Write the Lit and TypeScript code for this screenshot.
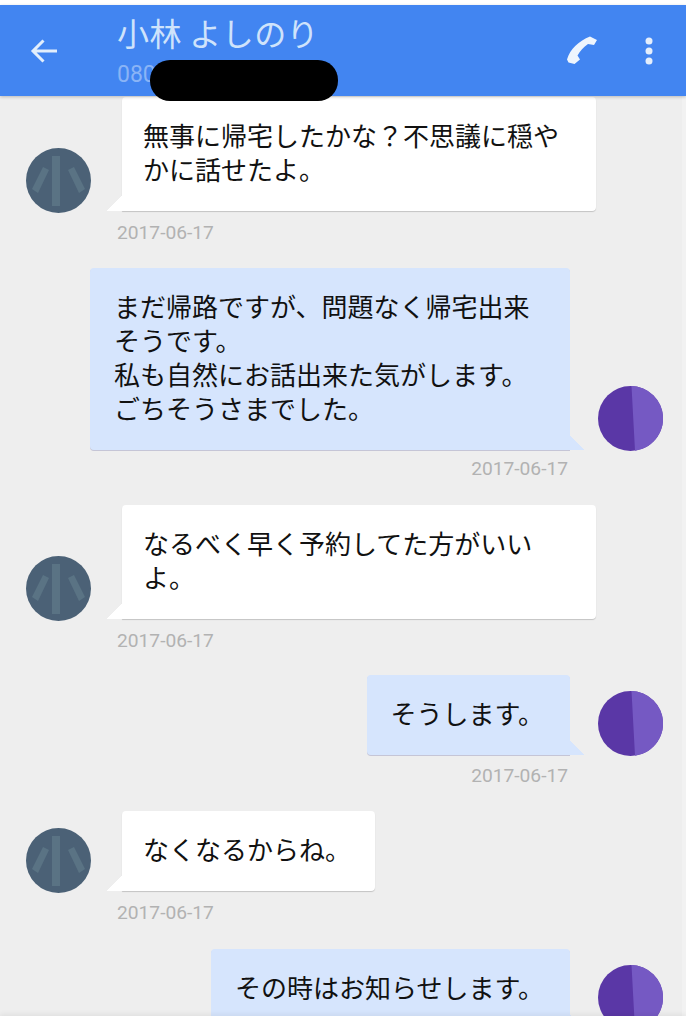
import { LitElement, html, css, svg } from "lit";
import { customElement } from "lit/decorators.js";

type Msg = { side: "in" | "out"; lines: string[]; wide?: boolean; hideDate?: boolean };

const DATE = "2017-06-17";
const MESSAGES: Msg[] = [
  { side: "in", wide: true, lines: ["無事に帰宅したかな？不思議に穏や", "かに話せたよ。"] },
  { side: "out", wide: true, lines: ["まだ帰路ですが、問題なく帰宅出来", "そうです。", "私も自然にお話出来た気がします。", "ごちそうさまでした。"] },
  { side: "in", wide: true, lines: ["なるべく早く予約してた方がいい", "よ。"] },
  { side: "out", lines: ["そうします。"] },
  { side: "in", lines: ["なくなるからね。"] },
  { side: "out", lines: ["その時はお知らせします。"], hideDate: true },
];

@customElement("app-root")
export class AppRoot extends LitElement {
  static styles = css`
    :host {
      display: flex;
      flex-direction: column;
      position: relative;
      width: 686px;
      height: 1024px;
      overflow: hidden;
      background: #fff;
      font-family: "Noto Sans CJK JP", "Noto Sans", sans-serif;
    }
    .top { height: 5px; flex: none; background: #fff; }
    .bar {
      flex: none;
      height: 91px;
      box-sizing: border-box;
      display: flex;
      align-items: center;
      background: #4285f1;
      box-shadow: 0 1px 3px rgba(0, 0, 0, 0.22);
      position: relative;
      z-index: 2;
    }
    .back { margin-left: 30px; width: 29px; height: 26px; flex: none; }
    .who { margin-left: 58px; flex: 1; min-width: 0; display: flex; flex-direction: column; }
    .name { font-size: 32px; line-height: 38px; font-weight: 400; letter-spacing: 0.4px; color: #cfe3fb; }
    .num { font-family: Roboto, sans-serif; font-size: 23px; line-height: 28px; color: #8ab4f6; margin-top: 10px; }
    .call { width: 32px; height: 32px; flex: none; margin-right: 46px; margin-top: 1px; }
    .more { width: 10px; height: 30px; flex: none; margin-right: 32px; margin-top: 1px; }
    .redact {
      position: absolute;
      left: 150px;
      top: 60px;
      width: 188px;
      height: 41px;
      background: #000;
      border-radius: 20px;
      z-index: 3;
    }
    .list {
      flex: none;
      height: 920px;
      box-sizing: border-box;
      background: #eeeeee;
      box-shadow: inset -4px 0 0 #f2f2f2;
      overflow: hidden;
      padding-top: 1px;
      display: flex;
      flex-direction: column;
    }
    .msg { flex: none; display: flex; flex-direction: column; margin-bottom: 21px; }
    .msg.out { margin-bottom: 22px; }
    .msg:first-child { margin-bottom: 22px; }
    .msg:nth-child(2) { margin-bottom: 23px; }
    .msg:nth-child(5) { margin-bottom: 23px; }
    .row { display: flex; align-items: flex-end; }
    .in .row { padding-left: 26px; gap: 31px; }
    .out .row { justify-content: flex-end; padding-right: 23px; gap: 28px; }
    .avatar { width: 65px; height: 65px; flex: none; margin-bottom: -2px; }
    .out .avatar { margin-bottom: -1px; }
    .bubble {
      position: relative;
      box-sizing: border-box;
      font-size: 26px;
      line-height: 34px;
      color: #111;
      white-space: nowrap;
      padding: 21px 24px 25px;
      border-radius: 4px;
    }
    .in .bubble {
      background: #fff;
      padding-left: 21px;
      border-bottom-left-radius: 0;
      box-shadow: 0 1px 1px rgba(0, 0, 0, 0.18);
    }
    .out .bubble {
      background: #d6e5fd;
      border-bottom-right-radius: 0;
      box-shadow: 0 1px 0 rgba(120, 120, 170, 0.35);
    }
    .out .bubble:not(.wide) { padding-right: 26px; }
    .in .bubble.wide { width: 474px; }
    .out .bubble.wide { width: 480px; }
    .bubble::after {
      content: "";
      position: absolute;
      bottom: 0;
      width: 15px;
      height: 15px;
    }
    .in .bubble::after { left: -15px; background: linear-gradient(to top left, #fff 50%, transparent 51%); }
    .out .bubble::after { right: -14px; background: linear-gradient(to top right, #d6e5fd 50%, transparent 51%); }
    .date {
      font-family: Roboto, sans-serif;
      font-size: 19.2px;
      line-height: 26px;
      color: #b2b2b2;
      margin-top: 9px;
    }
    .in .date { margin-left: 117px; }
    .out .date { align-self: flex-end; margin-right: 118px; margin-top: 8px; }
    .msg:nth-child(2) .date { margin-top: 6px; }
    .foot {
      flex: 1;
      background: #fff;
      position: relative;
      z-index: 1;
      box-shadow: 0 -2px 5px rgba(0, 0, 0, 0.06);
    }
  `;

  private inAvatar() {
    return svg`<svg class="avatar" viewBox="0 0 65 65" aria-hidden="true">
      <circle cx="32.5" cy="32.5" r="32.5" fill="#4b6176" />
      <g fill="#5a7384">
        <rect x="26" y="8" width="8" height="50" />
        <path d="M17 19l-11 22 6 4 11-23z" />
        <path d="M42 22l6-3 11 22-6 4z" />
      </g>
    </svg>`;
  }

  private outAvatar() {
    return svg`<svg class="avatar" viewBox="0 0 65 65" aria-hidden="true">
      <circle cx="32.5" cy="32.5" r="32.5" fill="#5a37a6" />
      <path d="M33.500 0A32.5 32.5 0 0 1 37 64.700Z" fill="#7559c3" />
    </svg>`;
  }

  render() {
    return html`
      <div class="top"></div>
      <header class="bar">
        <svg class="back" viewBox="0 0 29 26" aria-hidden="true">
          <path d="M27 13H3M13.500 2.500 3 13l10.500 10.500" fill="none" stroke="#e2eefc" stroke-width="3" />
        </svg>
        <div class="who">
          <div class="name">小林 よしのり</div>
          <div class="num">080</div>
        </div>
        <svg class="call" viewBox="0 0 32 32" aria-hidden="true">
          <path d="M1 24.500C4 14 13 6 24 1.500l7 3.500-3 5-6-1C17.500 12 14 16 11.500 20.500l2.500 4-5.500 4.500-6-1.500z" fill="#eef5fd" />
        </svg>
        <svg class="more" viewBox="0 0 10 30" aria-hidden="true">
          <circle cx="5" cy="5" r="3.500" fill="#e4eefc" />
          <circle cx="5" cy="15" r="3.500" fill="#e4eefc" />
          <circle cx="5" cy="25" r="3.500" fill="#e4eefc" />
        </svg>
      </header>
      <div class="redact"></div>
      <main class="list">
        ${MESSAGES.map(
          (m) => html`<div class="msg ${m.side}">
            <div class="row">
              ${m.side === "in" ? this.inAvatar() : ""}
              <div class="bubble ${m.wide ? "wide" : ""}">${m.lines.map((l, i) => html`${i ? html`<br />` : ""}${l}`)}</div>
              ${m.side === "out" ? this.outAvatar() : ""}
            </div>
            ${m.hideDate ? "" : html`<div class="date">${DATE}</div>`}
          </div>`
        )}
      </main>
      <div class="foot"></div>
    `;
  }
}
